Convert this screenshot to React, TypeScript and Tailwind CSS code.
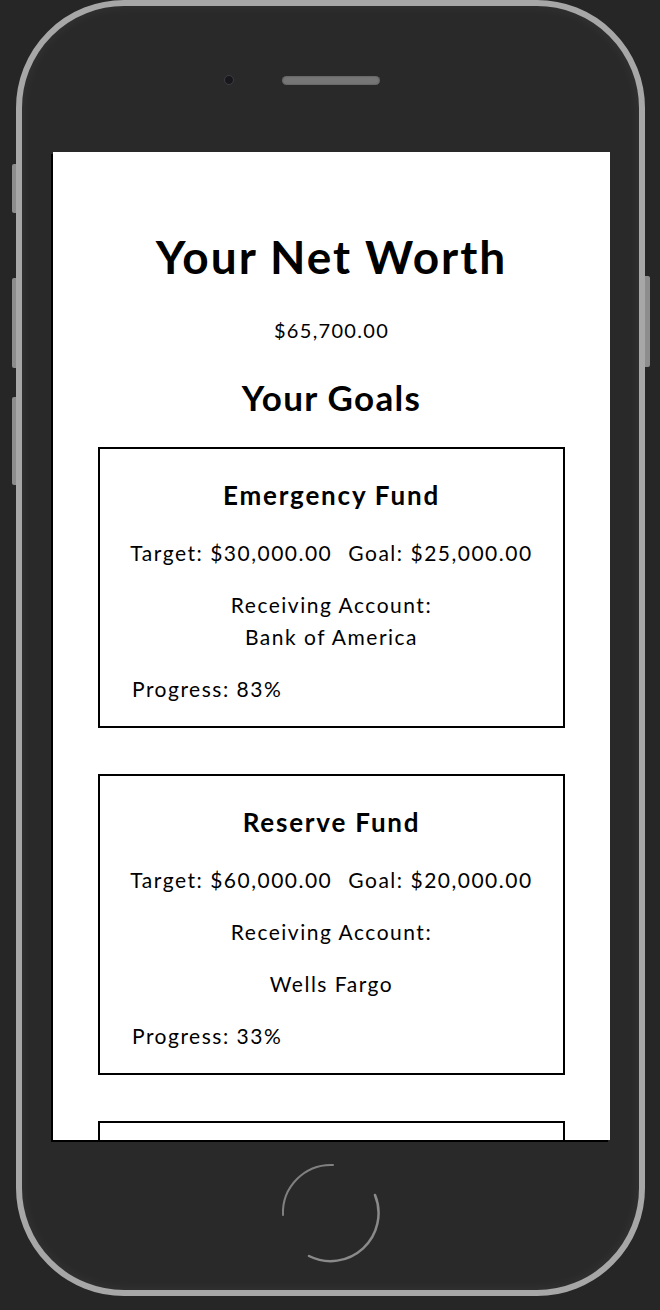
import React from "react";

type Goal = {
  name: string;
  target: string;
  goal: string;
  account: string;
  progress: number;
  split: boolean;
};

const goals: Goal[] = [
  { name: "Emergency Fund", target: "$30,000.00", goal: "$25,000.00", account: "Bank of America", progress: 83, split: false },
  { name: "Reserve Fund", target: "$60,000.00", goal: "$20,000.00", account: "Wells Fargo", progress: 33, split: true },
];

function GoalCard({ g }: { g: Goal }) {
  return (
    <div className="w-[467px] shrink-0 border-2 border-black bg-white px-[30px] pt-[30px] pb-[21px] text-[21px] leading-[32px] tracking-[1.5px] text-black">
      <h3 className="text-center text-[26px] font-bold leading-[32px] tracking-[1.8px] mb-[26px]">{g.name}</h3>
      <p className="text-center whitespace-nowrap">
        <span>Target: {g.target}</span>
        <span className="ml-[16px]">Goal: {g.goal}</span>
      </p>
      {g.split ? (
        <>
          <p className="mt-[20px] text-center">Receiving Account:</p>
          <p className="mt-[20px] text-center">{g.account}</p>
        </>
      ) : (
        <p className="mt-[20px] text-center">
          Receiving Account:
          <br />
          {g.account}
        </p>
      )}
      <p className="mt-[20px] pl-[2px]">Progress: {g.progress}%</p>
    </div>
  );
}

function HomeButton() {
  // two broken arcs, like the reference ring
  return (
    <svg width="100" height="100" viewBox="0 0 100 100" className="mt-[23px]">
      <path d="M52 2 A48 48 0 0 0 2 52" fill="none" stroke="#8a8a8a" strokeWidth="2" strokeLinecap="round" opacity="0.9" />
      <path d="M94 32 A48 48 0 0 1 28 93" fill="none" stroke="#8a8a8a" strokeWidth="2.5" strokeLinecap="round" />
    </svg>
  );
}

export default function App() {
  return (
    <div className="h-[1310px] w-[660px] overflow-hidden bg-[#262626] font-['Lato',sans-serif]">
      <div className="relative ml-[16px] w-[629px]">
        {/* side buttons */}
        <div className="absolute left-[-4px] top-[164px] h-[49px] w-[6px] rounded-l-[2px] bg-[#8d8d8d]" />
        <div className="absolute left-[-4px] top-[278px] h-[90px] w-[6px] rounded-l-[2px] bg-[#8d8d8d]" />
        <div className="absolute left-[-4px] top-[397px] h-[88px] w-[6px] rounded-l-[2px] bg-[#8d8d8d]" />
        <div className="absolute right-[-5px] top-[276px] h-[91px] w-[7px] rounded-r-[2px] bg-[#8d8d8d]" />

        <div className="relative z-10 flex h-[1296px] flex-col items-center rounded-[108px] border-[6px] border-[#a7a7a7] bg-[#292929] shadow-[inset_0_0_14px_rgba(255,255,255,0.06)]">
          {/* camera + speaker */}
          <div className="mt-[69px] flex items-center gap-[48px]">
            <div className="h-[10px] w-[10px] rounded-full border border-[#3c3c44] bg-[#18181c]" />
            <div className="h-[9px] w-[98px] rounded-full bg-[#767676] shadow-[inset_0_0_2px_#444]" />
            <div className="h-[10px] w-[10px]" />
          </div>

          {/* screen */}
          <div className="mt-[67px] ml-[2px] h-[988px] w-[557px] shrink-0 overflow-hidden bg-white shadow-[-2px_2px_0_#000]">
            <div className="flex flex-col items-center pt-[77px] text-black">
              <h1 className="text-[46px] font-bold leading-[56px] tracking-[2px]">Your Net Worth</h1>
              <p className="mt-[31px] text-[20px] leading-[28px] tracking-[1.3px]">$65,700.00</p>
              <h2 className="mt-[31px] text-[35px] font-bold leading-[44px] tracking-[1.3px]">Your Goals</h2>
              <div className="mt-[28px] flex flex-col items-center gap-[46px]">
                {goals.map((g) => (
                  <GoalCard key={g.name} g={g} />
                ))}
                {/* next card, scrolled below the fold */}
                <div className="h-[280px] w-[467px] shrink-0 border-2 border-black bg-white" />
              </div>
            </div>
          </div>

          <HomeButton />
        </div>
      </div>
    </div>
  );
}
